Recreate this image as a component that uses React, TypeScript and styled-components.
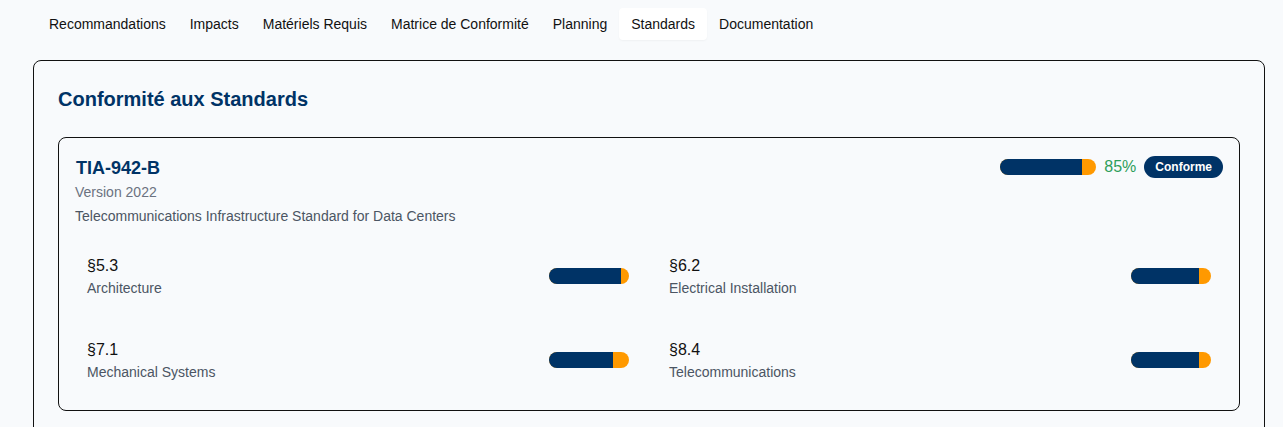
import React from "react";
import styled, { createGlobalStyle } from "styled-components";

const GlobalStyle = createGlobalStyle`
  html, body {
    margin: 0;
    padding: 0;
    background: #f8fafc;
    font-family: "Liberation Sans", Arial, sans-serif;
  }
  * {
    box-sizing: border-box;
  }
`;

const Page = styled.div`
  padding: 8px 18px 0 33px;
`;

const TabList = styled.div`
  display: flex;
  padding-left: 4px;
`;

const Tab = styled.button<{ $active?: boolean }>`
  border: none;
  font-family: inherit;
  font-size: 14px;
  line-height: 20px;
  padding: 6px 12px;
  border-radius: 4px;
  color: #111;
  cursor: pointer;
  background: ${(p) => (p.$active ? "#ffffff" : "transparent")};
  box-shadow: ${(p) => (p.$active ? "0 1px 2px rgba(0,0,0,0.04)" : "none")};
`;

const Card = styled.section`
  margin-top: 20px;
  border: 1px solid #111;
  border-radius: 8px;
  padding: 24px;
  background: #f8fafc;
`;

const CardTitle = styled.h2`
  margin: 0 0 24px;
  font-size: 20px;
  line-height: 28px;
  font-weight: 700;
  color: #003366;
`;

const StandardBox = styled.div`
  border: 1px solid #111;
  border-radius: 8px;
  padding: 17px 16px 16px;
`;

const Header = styled.div`
  display: flex;
  justify-content: space-between;
  align-items: flex-start;
`;

const StdName = styled.h3`
  margin: 0;
  padding-left: 1px;
  font-size: 18px;
  line-height: 26px;
  font-weight: 700;
  color: #003366;
`;

const Version = styled.div`
  margin-top: 1px;
  font-size: 14px;
  line-height: 20px;
  color: #6b7280;
`;

const Description = styled.div`
  margin-top: 4px;
  font-size: 14px;
  line-height: 20px;
  color: #4b5563;
`;

const Score = styled.div`
  display: flex;
  align-items: center;
  gap: 8px;
  height: 24px;
`;

const Track = styled.div<{ $width: number }>`
  width: ${(p) => p.$width}px;
  height: 16px;
  border-radius: 8px;
  background: #ff9900;
  overflow: hidden;
`;

const Fill = styled.div`
  height: 100%;
  background: #003366;
`;

const Percent = styled.span`
  font-size: 16px;
  color: #2e9e5a;
`;

const Badge = styled.span`
  background: #003366;
  color: #fff;
  font-size: 12px;
  font-weight: 700;
  line-height: 16px;
  padding: 3px 11px;
  border-radius: 999px;
`;

const Sections = styled.div`
  margin-top: 16px;
  display: grid;
  grid-template-columns: 1fr 1fr;
  gap: 16px;
`;

const Section = styled.div`
  display: flex;
  justify-content: space-between;
  align-items: center;
  padding: 12px;
`;

const Code = styled.div`
  font-size: 16px;
  line-height: 24px;
  color: #111;
`;

const Label = styled.div`
  font-size: 14px;
  line-height: 20px;
  color: #4b5563;
`;

const tabs = [
  "Recommandations",
  "Impacts",
  "Matériels Requis",
  "Matrice de Conformité",
  "Planning",
  "Standards",
  "Documentation",
];

const sections = [
  { code: "§5.3", label: "Architecture", value: 90 },
  { code: "§6.2", label: "Electrical Installation", value: 85 },
  { code: "§7.1", label: "Mechanical Systems", value: 80 },
  { code: "§8.4", label: "Telecommunications", value: 85 },
];

function Bar({ width, value }: { width: number; value: number }) {
  return (
    <Track $width={width}>
      <Fill style={{ width: `${value}%` }} />
    </Track>
  );
}

export default function App() {
  return (
    <>
      <GlobalStyle />
      <Page>
        <TabList>
          {tabs.map((t) => (
            <Tab key={t} $active={t === "Standards"}>
              {t}
            </Tab>
          ))}
        </TabList>
        <Card>
          <CardTitle>Conformité aux Standards</CardTitle>
          <StandardBox>
            <Header>
              <div>
                <StdName>TIA-942-B</StdName>
                <Version>Version 2022</Version>
                <Description>
                  Telecommunications Infrastructure Standard for Data Centers
                </Description>
              </div>
              <Score>
                <Bar width={96} value={85} />
                <Percent>85%</Percent>
                <Badge>Conforme</Badge>
              </Score>
            </Header>
            <Sections>
              {sections.map((s) => (
                <Section key={s.code}>
                  <div>
                    <Code>{s.code}</Code>
                    <Label>{s.label}</Label>
                  </div>
                  <Bar width={80} value={s.value} />
                </Section>
              ))}
            </Sections>
          </StandardBox>
        </Card>
      </Page>
    </>
  );
}
